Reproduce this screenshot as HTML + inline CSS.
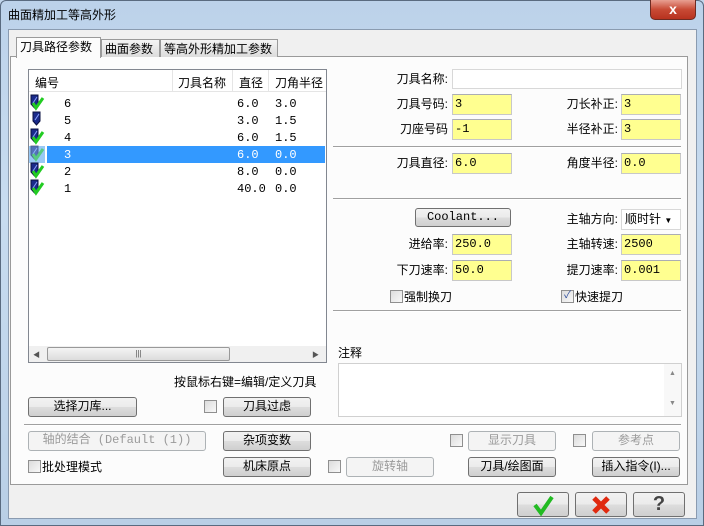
<!DOCTYPE html>
<html><head><meta charset="utf-8"><style>
*{box-sizing:border-box;margin:0;padding:0}
body{width:704px;height:526px;overflow:hidden;background:#c2d6ec;font-family:"Liberation Sans","Noto Sans CJK SC",sans-serif;font-size:12px;color:#000;position:relative}
.a{position:absolute}
.frame{left:0;top:0;width:704px;height:526px;background:linear-gradient(180deg,#bcd2ea 0,#c8dcf0 40%,#b9cfe6 100%);border:1px solid #5a6b80;border-radius:6px 6px 0 0}
.client{left:8px;top:29px;width:689px;height:490px;background:#f0f0f0;border:1px solid #8a9bb0}
.panel{left:10px;top:56px;width:678px;height:429px;background:#fcfcfc;border:1px solid #9a9a9a}
.tab{height:20px;border:1px solid #9a9a9a;border-bottom:none;background:linear-gradient(#f4f4f4,#dcdcdc);padding:2px 3px;font-size:12px;line-height:15px}
.lbl{font-size:12px;line-height:14px;white-space:nowrap}
.r{text-align:right}
.inp{height:21px;background:#ffff90;border:1px solid #c8c8c8;border-top-color:#abadb3;font-family:"Liberation Mono","Noto Sans CJK SC",monospace;font-size:12px;padding:2px 2px;line-height:15px}
.btn{height:20px;border:1px solid #707070;border-radius:3px;background:linear-gradient(#f2f2f2 0,#ebebeb 50%,#dddddd 51%,#cfcfcf 100%);text-align:center;font-size:12px;line-height:17px}
.dis{border-color:#adb2b5;background:#f4f4f4;color:#9a9a9a}
.cb{width:13px;height:13px;border:1px solid #8f8f8f;background:linear-gradient(135deg,#dcdcdc,#f8f8f8)}
.sep{height:1px;background:#a0a0a0;border-bottom:1px solid #fff;box-sizing:content-box}
.mono{font-family:"Liberation Mono",monospace;font-size:12px}
.ic{width:12px;height:16px}
</style></head><body>
<div class="a frame"></div>
<div class="a lbl" style="left:8px;top:8px;font-size:12px">曲面精加工等高外形</div>
<div class="a" style="left:650px;top:0;width:46px;height:20px;border:1px solid #6e2b22;border-top:none;border-radius:0 0 5px 5px;background:linear-gradient(#e8a092,#c84a35 50%,#b7321f 100%);color:#fff;text-align:center;font-weight:bold;font-size:14px;line-height:18px">x</div>
<div class="a client"></div>
<div class="a panel"></div>
<div class="a tab" style="left:16px;top:37px;width:85px;height:21px;background:#fcfcfc;z-index:2">刀具路径参数</div>
<div class="a tab" style="left:101px;top:39px;width:59px;height:18px">曲面参数</div>
<div class="a tab" style="left:160px;top:39px;width:118px;height:18px">等高外形精加工参数</div>

<!-- listview -->
<div class="a" style="left:28px;top:69px;width:299px;height:294px;background:#fff;border:1px solid #828790"></div>
<div class="a" style="left:29px;top:70px;width:297px;height:22px;border-bottom:1px solid #e5e5e5"></div>
<div class="a" style="left:172px;top:70px;width:1px;height:22px;background:#e5e5e5"></div>
<div class="a" style="left:232px;top:70px;width:1px;height:22px;background:#e5e5e5"></div>
<div class="a" style="left:268px;top:70px;width:1px;height:22px;background:#e5e5e5"></div>
<div class="a lbl" style="left:35px;top:76px">编号</div>
<div class="a lbl" style="left:178px;top:76px">刀具名称</div>
<div class="a lbl" style="left:239px;top:76px">直径</div>
<div class="a lbl" style="left:275px;top:76px">刀角半径</div>
<div class="a" style="left:47px;top:146px;width:278px;height:17px;background:#3399ff"></div>
<div class="a" style="left:29px;top:146px;width:16px;height:17px;background:#99c9f5"></div>
<svg class="a" style="left:29px;top:94px" width="20" height="104" viewBox="0 0 20 104">
<defs><g id="t"><path d="M2 1h7v9l-3.5 4l-3.5-4z" fill="#1a2a8a" stroke="#0a1040" stroke-width="1"/><path d="M4 9l4-6" stroke="#8aa0ff"/></g>
<g id="k"><path d="M4 8l3 5l7-10" stroke="#22cc22" stroke-width="3" fill="none"/></g></defs>
<use href="#t" y="0"/><use href="#k" y="1"/>
<use href="#t" x="2" y="17"/>
<use href="#t" y="34"/><use href="#k" y="35"/>
<g opacity="0.55"><use href="#t" y="51"/><use href="#k" y="52"/></g>
<use href="#t" y="68"/><use href="#k" y="69"/>
<use href="#t" y="85"/><use href="#k" y="86"/>
</svg>
<div class="a mono" style="left:64px;top:96px;line-height:17px">6<br>5<br>4<br><span style="color:#fff">3</span><br>2<br>1</div>
<div class="a mono" style="left:237px;top:96px;line-height:17px">6.0<br>3.0<br>6.0<br><span style="color:#fff">6.0</span><br>8.0<br>40.0</div>
<div class="a mono" style="left:275px;top:96px;line-height:17px">3.0<br>1.5<br>1.5<br><span style="color:#fff">0.0</span><br>0.0<br>0.0</div>
<!-- scrollbar -->
<div class="a" style="left:29px;top:346px;width:297px;height:16px;background:#f0f0f0"></div>
<div class="a" style="left:33px;top:350px;font-size:7px;color:#555">◀</div>
<div class="a" style="left:312px;top:350px;font-size:7px;color:#555">▶</div>
<div class="a" style="left:47px;top:347px;width:183px;height:14px;border:1px solid #999;border-radius:2px;background:linear-gradient(#f4f4f4,#dcdcdc);text-align:center;font-size:8px;line-height:12px;color:#555">|||</div>

<!-- right fields -->
<div class="a lbl r" style="left:360px;top:72px;width:88px">刀具名称:</div>
<div class="a inp" style="left:452px;top:69px;width:230px;height:20px;background:#fff;border-color:#d8d8d8"></div>
<div class="a lbl r" style="left:360px;top:97px;width:88px">刀具号码:</div>
<div class="a inp" style="left:452px;top:94px;width:60px">3</div>
<div class="a lbl r" style="left:530px;top:97px;width:88px">刀长补正:</div>
<div class="a inp" style="left:621px;top:94px;width:60px">3</div>
<div class="a lbl r" style="left:360px;top:122px;width:88px">刀座号码</div>
<div class="a inp" style="left:452px;top:119px;width:60px">-1</div>
<div class="a lbl r" style="left:530px;top:122px;width:88px">半径补正:</div>
<div class="a inp" style="left:621px;top:119px;width:60px">3</div>
<div class="a sep" style="left:333px;top:146px;width:348px"></div>
<div class="a lbl r" style="left:360px;top:156px;width:88px">刀具直径:</div>
<div class="a inp" style="left:452px;top:153px;width:60px">6.0</div>
<div class="a lbl r" style="left:530px;top:156px;width:88px">角度半径:</div>
<div class="a inp" style="left:621px;top:153px;width:60px">0.0</div>
<div class="a sep" style="left:333px;top:198px;width:348px"></div>
<div class="a btn mono" style="left:415px;top:208px;width:96px;height:19px">Coolant...</div>
<div class="a lbl r" style="left:530px;top:212px;width:88px">主轴方向:</div>
<div class="a" style="left:621px;top:209px;width:60px;height:21px;background:#fff;border:1px solid #d8d8d8;padding:2px 3px;line-height:15px">顺时针 <span style="font-size:8px">▼</span></div>
<div class="a lbl r" style="left:360px;top:237px;width:88px">进给率:</div>
<div class="a inp" style="left:452px;top:234px;width:60px">250.0</div>
<div class="a lbl r" style="left:530px;top:237px;width:88px">主轴转速:</div>
<div class="a inp" style="left:621px;top:234px;width:60px">2500</div>
<div class="a lbl r" style="left:360px;top:263px;width:88px">下刀速率:</div>
<div class="a inp" style="left:452px;top:260px;width:60px">50.0</div>
<div class="a lbl r" style="left:530px;top:263px;width:88px">提刀速率:</div>
<div class="a inp" style="left:621px;top:260px;width:60px">0.001</div>
<div class="a cb" style="left:390px;top:290px"></div>
<div class="a lbl" style="left:404px;top:290px">强制换刀</div>
<div class="a cb" style="left:561px;top:290px;font-size:10px;line-height:10px;color:#2a4a9a;text-align:center">✓</div>
<div class="a lbl" style="left:575px;top:290px">快速提刀</div>
<div class="a sep" style="left:333px;top:310px;width:348px"></div>

<div class="a lbl" style="left:338px;top:346px">注释</div>
<div class="a" style="left:338px;top:363px;width:344px;height:54px;background:#fff;border:1px solid #d0d0d0"></div>
<div class="a" style="left:664px;top:364px;width:17px;height:52px;background:#f8f8f8;font-size:7px;color:#888;text-align:center;line-height:10px;padding-top:5px">▲<br><br><br>▼</div>

<div class="a lbl" style="left:174px;top:375px">按鼠标右键=编辑/定义刀具</div>
<div class="a btn" style="left:28px;top:397px;width:109px">选择刀库...</div>
<div class="a cb" style="left:204px;top:400px"></div>
<div class="a btn" style="left:223px;top:397px;width:88px">刀具过虑</div>
<div class="a sep" style="left:24px;top:424px;width:657px"></div>

<div class="a btn dis mono" style="left:28px;top:431px;width:178px">轴的结合 (Default (1))</div>
<div class="a btn" style="left:223px;top:431px;width:88px">杂项变数</div>
<div class="a cb" style="left:450px;top:434px"></div>
<div class="a btn dis" style="left:468px;top:431px;width:88px">显示刀具</div>
<div class="a cb" style="left:573px;top:434px"></div>
<div class="a btn dis" style="left:592px;top:431px;width:88px">参考点</div>

<div class="a cb" style="left:28px;top:460px"></div>
<div class="a lbl" style="left:42px;top:460px">批处理模式</div>
<div class="a btn" style="left:223px;top:457px;width:88px">机床原点</div>
<div class="a cb" style="left:328px;top:460px"></div>
<div class="a btn dis" style="left:346px;top:457px;width:88px">旋转轴</div>
<div class="a btn" style="left:468px;top:457px;width:88px">刀具/绘图面</div>
<div class="a btn" style="left:592px;top:457px;width:88px">插入指令(I)...</div>

<div class="a btn" style="left:517px;top:492px;width:52px;height:25px"></div>
<svg class="a" style="left:532px;top:494px" width="22" height="22"><path d="M3 11l6 8l11-16" stroke="#22bb22" stroke-width="4" fill="none"/></svg>
<div class="a btn" style="left:575px;top:492px;width:52px;height:25px"></div>
<svg class="a" style="left:590px;top:494px" width="22" height="22"><path d="M4 4l14 14M18 4L4 18" stroke="#e02a10" stroke-width="5"/></svg>
<div class="a btn" style="left:633px;top:492px;width:52px;height:25px;font-size:20px;line-height:23px;font-weight:bold;color:#444">?</div>
</body></html>
